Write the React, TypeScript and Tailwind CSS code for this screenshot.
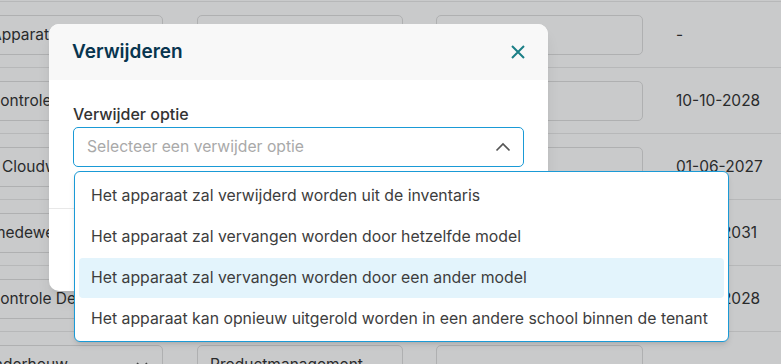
type Row = {
  name: string;
  nameCls: string;
  product: string;
  date: string;
  chevron?: boolean;
};

const rows: Row[] = [
  { name: "Apparaten", nameCls: "pl-[30px]", product: "", date: "-" },
  { name: "Controle", nameCls: "pl-[28px]", product: "", date: "10-10-2028" },
  { name: "Cloudwerkplek", nameCls: "pl-[41px]", product: "", date: "01-06-2027" },
  { name: "medewerker", nameCls: "pl-[31px]", product: "", date: "01-01-2031" },
  { name: "Controle Device", nameCls: "pl-[28px]", product: "", date: "10-10-2028" },
  { name: "Onderhouw", nameCls: "pl-[21px]", product: "Productmanagement", date: "", chevron: true },
];

const options = [
  "Het apparaat zal verwijderd worden uit de inventaris",
  "Het apparaat zal vervangen worden door hetzelfde model",
  "Het apparaat zal vervangen worden door een ander model",
  "Het apparaat kan opnieuw uitgerold worden in een andere school binnen de tenant",
];

function TableRow({ row }: { row: Row }) {
  return (
    <div className="flex h-[66px] items-center border-b border-[#e8e8e8] text-[15.5px] text-[#333]">
      <div className="w-[180px] overflow-hidden pr-[17px]">
        <div
          className={`-ml-[40px] flex h-10 w-[203px] items-center justify-between rounded-[5px] border border-[#dedede] pr-[14px] ${row.nameCls}`}
        >
          <span className="whitespace-nowrap">{row.name}</span>
          {row.chevron && (
            <svg width="12" height="12" viewBox="0 0 12 12" fill="none">
              <path d="M1 4l5 5 5-5" stroke="#555" strokeWidth="1.5" />
            </svg>
          )}
        </div>
      </div>
      <div className="w-[240px] px-[17px]">
        <div className="flex h-10 items-center rounded-[5px] border border-[#dedede] px-3">
          {row.product}
        </div>
      </div>
      <div className="w-[239px] px-[16px]">
        <div className="h-10 rounded-[5px] border border-[#dedede]" />
      </div>
      <div className="pl-[17px]">{row.date}</div>
    </div>
  );
}

export default function App() {
  return (
    <div className="relative h-[364px] w-[781px] overflow-hidden bg-white font-['Inter',sans-serif]">
      <div className="pt-[1px]">
        <div className="border-t border-[#e8e8e8]">
          {rows.map((row, i) => (
            <TableRow key={i} row={row} />
          ))}
        </div>
      </div>

      <div className="absolute inset-0 bg-[rgba(10,12,18,0.22)]" />

      <div className="absolute left-[49px] top-[24px] w-[499px] rounded-[10px] bg-white shadow-lg">
        <div className="flex h-[56px] items-center justify-between rounded-t-[10px] bg-[#f8f8f8] pl-[23px] pr-[23px]">
          <h2 className="text-[19px] font-semibold text-[#08354f]">Verwijderen</h2>
          <svg width="14" height="14" viewBox="0 0 14 14" fill="none">
            <path d="M1 1l12 12M13 1L1 13" stroke="#1b7f86" strokeWidth="2" />
          </svg>
        </div>
        <div className="px-6 pt-6 pb-[41px]">
          <div className="mb-[3px] text-[16px] leading-5 font-medium text-[#333]">Verwijder optie</div>
          <div className="relative">
            <div className="flex h-10 items-center justify-between rounded-[5px] border border-[#1a9ad6] pl-[13px] pr-[12px]">
              <span className="text-[15.7px] text-[#a9a9a9]">Selecteer een verwijder optie</span>
              <svg width="16" height="16" viewBox="0 0 16 16" fill="none">
                <path d="M1.5 11.5L8 5l6.5 6.5" stroke="#555" strokeWidth="1.7" />
              </svg>
            </div>
            <div className="absolute left-[1px] top-[44px] z-10 flex w-[655px] flex-col gap-[1px] rounded-[6px] border border-[#1a9ad6] bg-white px-1 pt-1 pb-[2px] shadow-md">
              {options.map((o, i) => (
                <div
                  key={i}
                  className={`flex h-10 items-center whitespace-nowrap rounded-[4px] px-3 text-[15.8px] text-[#3d3d3d] ${
                    i === 2 ? "bg-[#e3f4fc]" : ""
                  }`}
                >
                  {o}
                </div>
              ))}
            </div>
          </div>
        </div>
        <div className="h-[83px] border-t border-[#e8e8e8]" />
      </div>
    </div>
  );
}
